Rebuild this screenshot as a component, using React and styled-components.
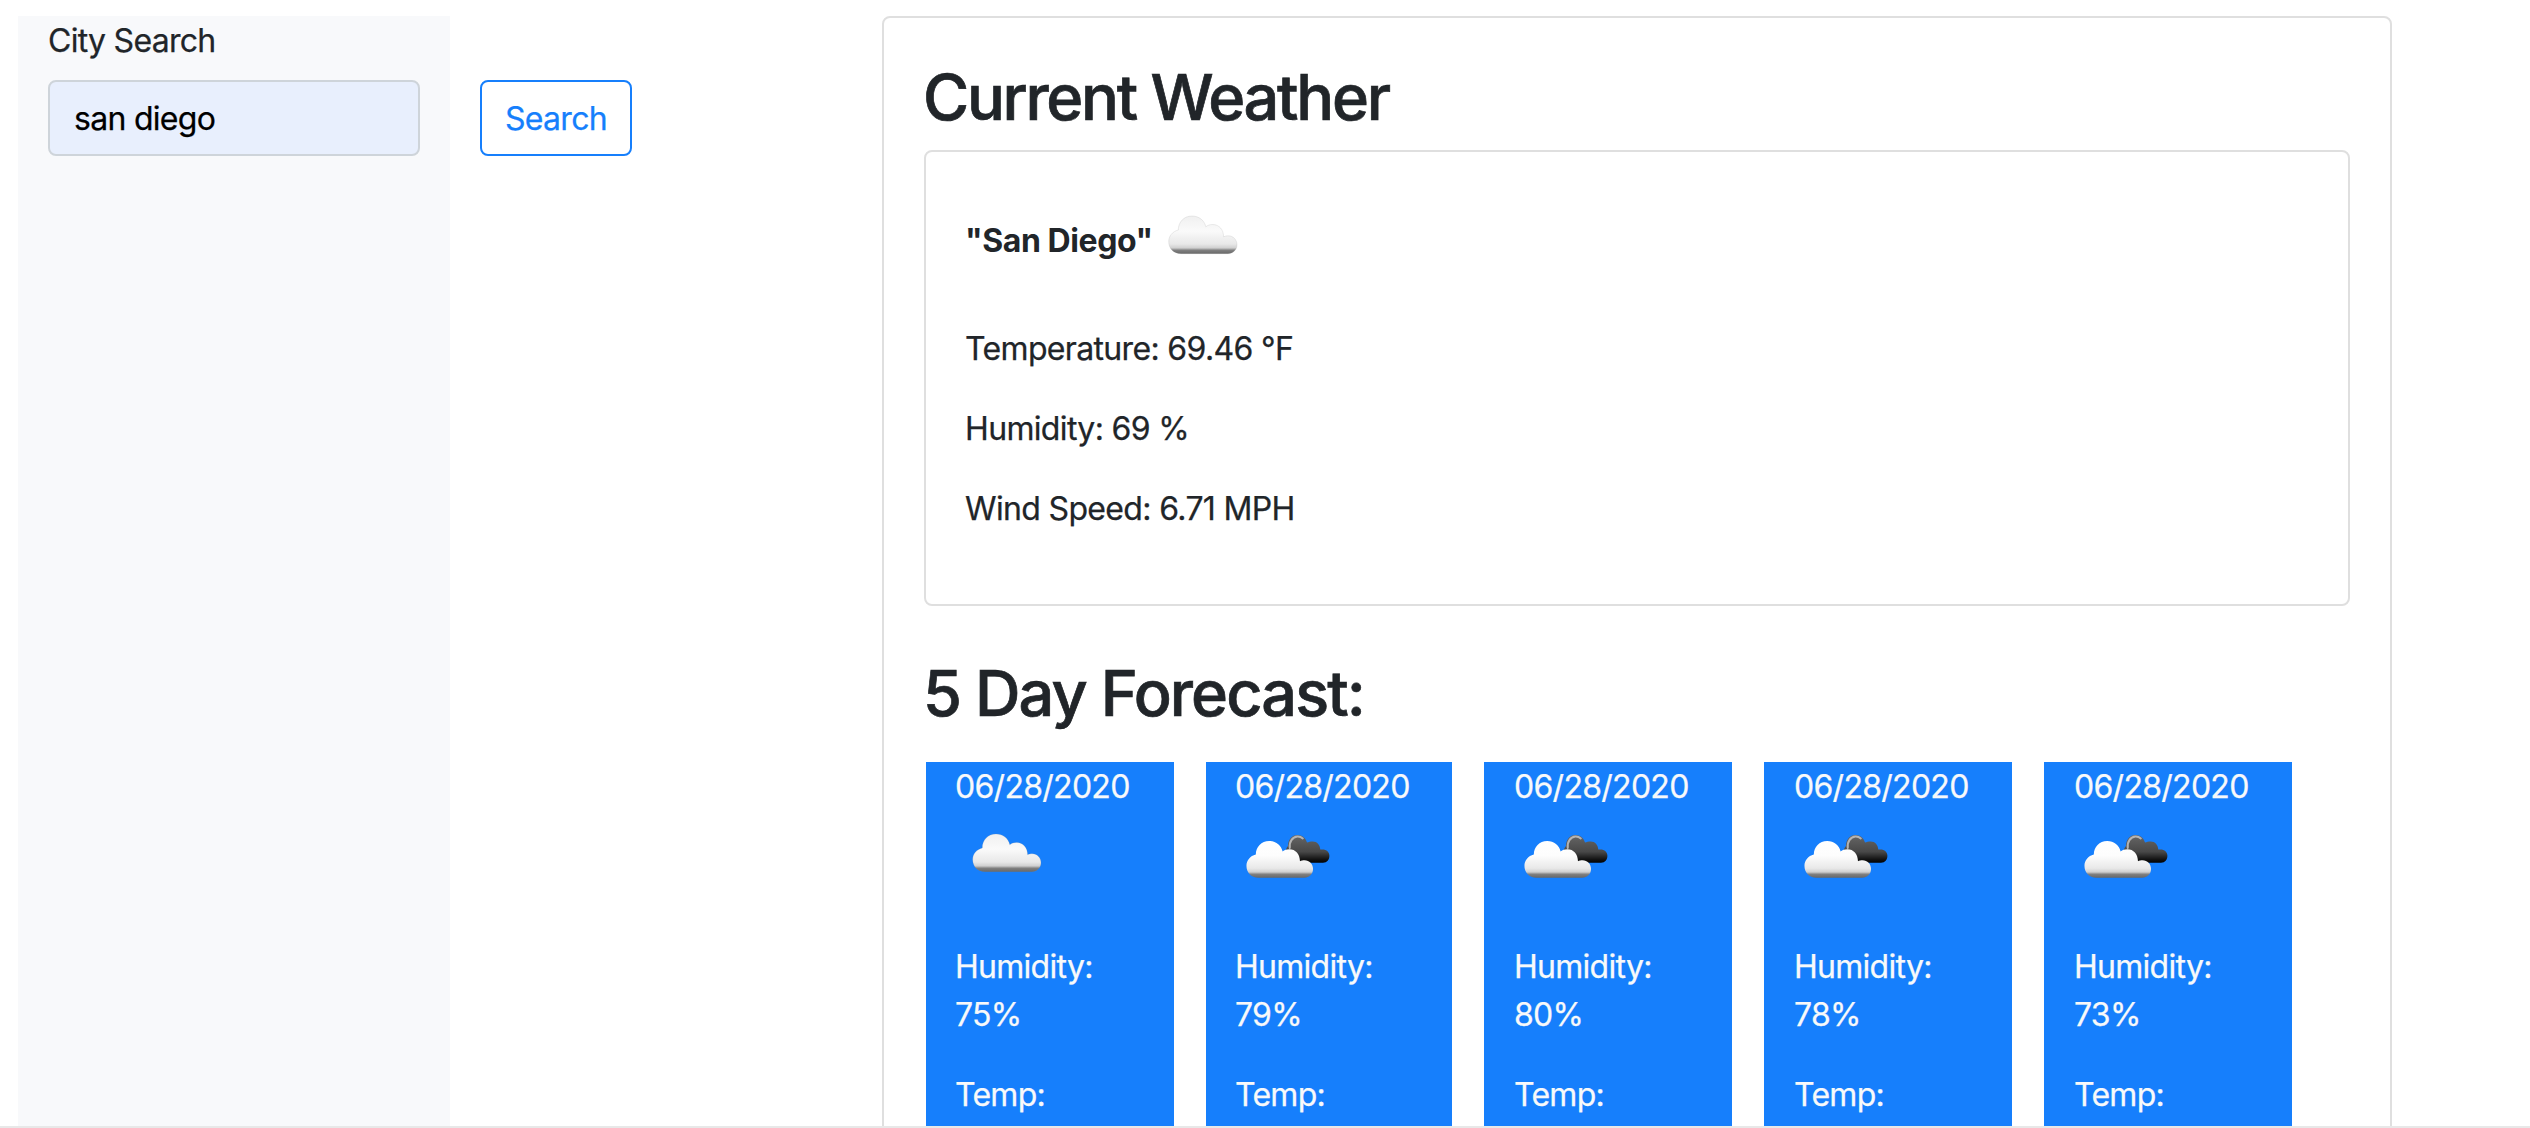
import React from "react";
import styled, { createGlobalStyle } from "styled-components";

const GlobalStyle = createGlobalStyle`
  *, *::before, *::after { box-sizing: border-box; }
  body {
    margin: 0;
    background: #fff;
    color: #212529;
    font-family: Inter, "Liberation Sans", sans-serif;
    font-size: 32px;
    font-weight: 400;
    line-height: 48px;
    letter-spacing: -0.0225em;
    -webkit-text-stroke: 0.25px currentColor;
  }
`;

const Page = styled.div`
  display: flex;
  flex-direction: column;
  height: 1128px;
  overflow: hidden;
`;

const Content = styled.main`
  flex: 1;
  min-height: 0;
  display: flex;
  align-items: flex-start;
  padding: 16px 18px 0;
  overflow: hidden;
`;

const BottomEdge = styled.footer`
  flex: none;
  height: 2px;
  background: #e8e8e8;
`;

const Sidebar = styled.aside`
  flex: none;
  width: 432px;
  height: 1112px;
  padding: 1px 30px 0;
  background: #f8f9fb;
`;

const Label = styled.label`
  display: block;
  margin-bottom: 15px;
`;

const CityInput = styled.input`
  display: block;
  width: 372px;
  height: 76px;
  padding: 12px 24px;
  border: 2px solid #ced4da;
  border-radius: 8px;
  background: #e8effd;
  color: #000;
  font: inherit;
  letter-spacing: inherit;
  outline: none;
`;

const SearchButton = styled.button`
  flex: none;
  width: 152px;
  height: 76px;
  margin: 64px 250px 0 30px;
  padding: 2px 0 0;
  border: 2px solid #167ffc;
  border-radius: 8px;
  background: transparent;
  color: #167ffc;
  font: inherit;
  letter-spacing: inherit;
`;

const Card = styled.section`
  border: 2px solid #dfdfdf;
  border-radius: 8px;
  padding: 40px;
`;

const ResultsCard = styled(Card)`
  flex: none;
  width: 1510px;
  height: 1300px;
`;

const CurrentCard = styled(Card)`
  height: 456px;
  margin-bottom: 48px;
  padding-left: 39px;
  letter-spacing: -0.0205em;
`;

const Heading = styled.h2`
  margin: 0 0 0 -1px;
  height: 92px;
  font-size: 63px;
  font-weight: 500;
  line-height: 78px;
  letter-spacing: ${(p) => p.$tracking};
  -webkit-text-stroke: 0.7px currentColor;
`;

const CityLine = styled.div`
  display: flex;
  align-items: center;
  gap: 2px;
  height: 100px;
  margin-bottom: 33px;
`;

const CityName = styled.strong`
  width: 184px;
  padding-bottom: 3px;
  white-space: nowrap;
  font-weight: 700;
  letter-spacing: -0.013em;
  -webkit-text-stroke: 0;
`;

const Reading = styled.p`
  margin: 0 0 32px;
`;

const Forecast = styled.div`
  display: grid;
  grid-template-columns: 248px 246px 248px 248px 248px;
  gap: 32px;
  margin: 16px 0 0 2px;
`;

const Day = styled.article`
  height: 480px;
  padding: 1px 0 0 ${(p) => p.$inset}px;
  background: #167ffc;
  color: #f8f9fa;
`;

const DayIcon = styled.div`
  height: 100px;
  margin: -1px 0 33px ${(p) => 29 - p.$inset}px;
`;

const WeatherSvg = styled.svg`
  display: block;
  flex: none;
  width: 100px;
  height: 100px;
`;

const CLOUD =
  "M30 61.7C22.5 61.7 17.7 56.5 17.7 49.5C17.7 44 21.5 39.5 27.3 38C27.3 30 33 24 41 24C48 24 53.5 28.5 54.8 34.8C56.5 33.3 59 32.5 61.7 32.5C68 32.5 72.5 37.5 72.6 44.8C73.8 44.2 75.5 43.8 77.3 43.8C82.2 43.8 86 47.8 86 52.8C86 57.8 82 61.7 77 61.7Z";

function WeatherIcon({ kind, id }) {
  const light = `light-${id}`;
  const dark = `dark-${id}`;
  const broken = kind === "broken";
  return (
    <WeatherSvg viewBox="0 0 100 100" aria-hidden="true">
      <defs>
        <linearGradient id={light} gradientUnits="userSpaceOnUse" x1="0" y1="24" x2="0" y2="62">
          <stop offset="0" stopColor={broken ? "#ffffff" : "#f0f0f0"} />
          <stop offset="0.4" stopColor={broken ? "#fdfdfd" : "#fafafa"} />
          <stop offset="0.74" stopColor="#e8e8e8" />
          <stop offset="0.84" stopColor="#d0d0d0" />
          <stop offset="0.9" stopColor="#808080" />
          <stop offset="1" stopColor="#666" />
        </linearGradient>
        <linearGradient id={dark} gradientUnits="userSpaceOnUse" x1="0" y1="25" x2="0" y2="53">
          <stop offset="0" stopColor="#666" />
          <stop offset="0.6" stopColor="#484848" />
          <stop offset="0.88" stopColor="#111" />
          <stop offset="1" stopColor="#000" />
        </linearGradient>
      </defs>
      {broken && (
        <g>
          <path
            fill={`url(#${dark})`}
            d="M60 52.7C54 52.7 50.5 48 50.5 43C50.5 39.5 52 37 53 36C53 29.5 57 25 62.5 25C67.2 25 70.8 28 72 32.6C73.5 31.8 75.5 31.4 77.8 31.4C82 31.4 85 34.6 85.3 39.6C90.7 38.6 94.4 41.5 94.4 45.8C94.4 50 92 52.7 88 52.7Z"
          />
          <path
            fill="none"
            stroke="#c9c9c9"
            strokeWidth="2"
            strokeLinecap="round"
            opacity=".8"
            d="M54.8 38C53.8 31.6 57.6 27 62.4 26.6C64.6 26.5 66.4 27.2 67.8 28.4"
          />
        </g>
      )}
      <g transform={broken ? "translate(-5.8 7.5) scale(.975)" : undefined}>
        <path fill={`url(#${light})`} stroke="#888" strokeOpacity={broken ? 0 : 0.16} strokeWidth="1" d={CLOUD} />
      </g>
    </WeatherSvg>
  );
}

const days = [
  { icon: "cloud", humidity: "75%", inset: 29 },
  { icon: "broken", humidity: "79%", inset: 29 },
  { icon: "broken", humidity: "80%", inset: 30 },
  { icon: "broken", humidity: "78%", inset: 30 },
  { icon: "broken", humidity: "73%", inset: 30 },
];

export default function App() {
  return (
    <Page>
      <GlobalStyle />
      <Content>
        <Sidebar>
          <Label htmlFor="city">City Search</Label>
          <CityInput id="city" defaultValue="san diego" />
        </Sidebar>
        <SearchButton>Search</SearchButton>
        <ResultsCard>
          <Heading $tracking="-0.036em">Current Weather</Heading>
          <CurrentCard>
            <CityLine>
              <CityName>"San Diego"</CityName>
              <WeatherIcon kind="cloud" id="now" />
            </CityLine>
            <Reading>Temperature: 69.46 °F</Reading>
            <Reading>Humidity: 69 %</Reading>
            <Reading>Wind Speed: 6.71 MPH</Reading>
          </CurrentCard>
          <Heading $tracking="-0.03em">5 Day Forecast:</Heading>
          <Forecast>
            {days.map((day, i) => (
              <Day key={i} $inset={day.inset}>
                <div>06/28/2020</div>
                <DayIcon $inset={day.inset}>
                  <WeatherIcon kind={day.icon} id={i} />
                </DayIcon>
                <Reading>
                  Humidity:
                  <br />
                  {day.humidity}
                </Reading>
                <Reading>Temp:</Reading>
              </Day>
            ))}
          </Forecast>
        </ResultsCard>
      </Content>
      <BottomEdge />
    </Page>
  );
}
